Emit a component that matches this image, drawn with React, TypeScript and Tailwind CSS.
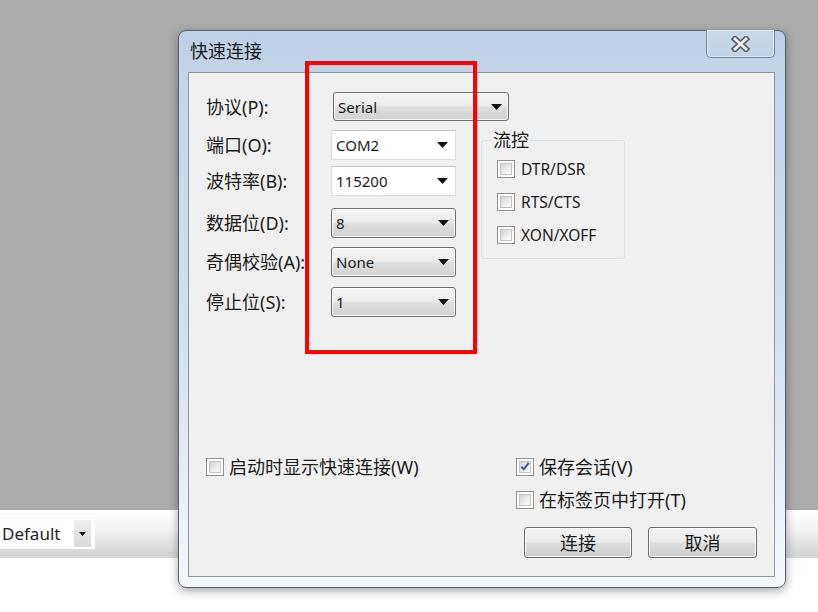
import React from "react";

const FONT = "font-['Noto_Sans','Noto_Sans_CJK_SC',sans-serif]";

function Arrow({ className = "" }: { className?: string }) {
  return (
    <svg width="11" height="6" viewBox="0 0 11 6" className={className}>
      <path d="M0 0 L11 0 L5.5 6 Z" fill="#111" />
    </svg>
  );
}

function ListCombo({ value, w, ml = 0 }: { value: string; w: number; ml?: number }) {
  return (
    <div
      className="h-full flex items-center justify-between rounded-[3px] border border-[#707070] bg-[linear-gradient(to_bottom,#f4f4f4_0%,#ececec_48%,#dedede_52%,#d2d2d2_100%)] pl-[4px] pr-[6px] shadow-[inset_0_0_0_1px_rgba(255,255,255,0.7)]"
      style={{ width: w, marginLeft: ml }}
    >
      <span className="text-[15px] leading-[20px] text-[#1c1c1c]">{value}</span>
      <Arrow />
    </div>
  );
}

function EditCombo({ value }: { value: string }) {
  return (
    <div className="h-full w-[125px] flex items-center justify-between border border-[#d9dde2] border-t-[#c3c7cc] bg-white pl-[4px] pr-[7px]">
      <span className="text-[15px] leading-[20px] text-[#1c1c1c]">{value}</span>
      <Arrow />
    </div>
  );
}

function CheckBox({ checked = false }: { checked?: boolean }) {
  return (
    <div className="w-[18px] h-[18px] shrink-0 border border-[#8e8f8f] bg-white p-[2px]">
      <div className="w-full h-full border border-[#c2c2c2] bg-[linear-gradient(135deg,#d2d2d2_0%,#eeeeee_60%,#fafafa_100%)] flex items-center justify-center">
        {checked && (
          <svg width="11" height="11" viewBox="0 0 11 11">
            <path d="M1.5 5.8 L4.2 8.6 L9.6 1.6" fill="none" stroke="#3d5597" strokeWidth="2.1" />
          </svg>
        )}
      </div>
    </div>
  );
}

function Row({ label, children, h, mt }: { label: string; children: React.ReactNode; h: number; mt: number }) {
  return (
    <div className="flex items-center" style={{ height: h, marginTop: mt }}>
      <div className="w-[125px] shrink-0 text-[18px] leading-[24px] text-[#1b1b1b] whitespace-nowrap">{label}</div>
      {children}
    </div>
  );
}

function Button({ label, w }: { label: string; w: number }) {
  return (
    <div
      className="h-[31px] rounded-[3px] border border-[#707070] bg-[linear-gradient(to_bottom,#f3f3f3_0%,#ebebeb_48%,#dddddd_52%,#cfcfcf_100%)] shadow-[inset_0_0_0_1px_rgba(255,255,255,0.75)] flex items-center justify-center text-[18px] leading-[24px] text-[#1b1b1b]"
      style={{ width: w }}
    >
      {label}
    </div>
  );
}

export default function App() {
  return (
    <div className={`relative w-[818px] h-[612px] overflow-hidden bg-white ${FONT}`}>
      {/* background app */}
      <div className="h-[510px] bg-[#ababab]" />
      <div className="h-[45px] border-t border-white bg-[linear-gradient(to_bottom,#ffffff_0%,#f3f3f3_40%,#d4d4d4_100%)] flex items-center">
        <div className="mt-[1px] h-[30px] w-[95px] bg-white flex items-center">
          <span className="pl-[2px] text-[17px] leading-[22px] text-[#222] w-[74px]">Default</span>
          <div className="h-[27px] w-[17px] bg-[linear-gradient(to_bottom,#eeeeee,#d9d9d9)] flex items-center justify-center">
            <svg width="7" height="4" viewBox="0 0 7 4">
              <path d="M0 0 L7 0 L3.5 4 Z" fill="#111" />
            </svg>
          </div>
        </div>
      </div>
      <div className="h-[3px] bg-[#d6d6d6]" />

      {/* dialog window */}
      <div className="absolute left-[178px] top-[30px] w-[608px] h-[558px] rounded-[8px] border border-[#58626d] bg-[linear-gradient(to_bottom,#bccfe4_0%,#c4d6e9_12%,#d3e1ef_55%,#e9f0f7_85%,#f4f7fa_100%)] shadow-[0_3px_10px_rgba(0,0,0,0.35)] flex flex-col">
        {/* title bar */}
        <div className="h-[41px] flex items-start">
          <div className="pl-[11px] pt-[8px] text-[18px] leading-[24px] text-[#1b1b1b]">快速连接</div>
          <div className="ml-auto mr-[10px] mt-[-1px] w-[69px] h-[28px] rounded-b-[5px] border border-t-0 border-[#7a8796] bg-[linear-gradient(to_bottom,#c9d8e8,#c0d2e5)] shadow-[inset_0_0_0_1px_rgba(255,255,255,0.45)] flex items-center justify-center">
            <svg width="19" height="16" viewBox="0 0 19 16" className="mt-[1px]">
              <path d="M4 3 L15 13 M15 3 L4 13" stroke="#5b5f66" strokeWidth="6" strokeLinecap="square" />
              <path d="M4 3 L15 13 M15 3 L4 13" stroke="#eef0f2" strokeWidth="2.8" strokeLinecap="square" />
            </svg>
          </div>
        </div>

        {/* client area */}
        <div className="ml-[9px] w-[587px] h-[505px] border border-[#8b97a4] bg-[#f0f0f0] flex flex-col">
          <div className="pl-[17px] pt-[19px]">
            <Row label="协议(P):" h={29} mt={0}>
              <ListCombo value="Serial" w={176} ml={2} />
            </Row>
            <div className="flex">
              <div>
                <Row label="端口(O):" h={30} mt={9}>
                  <EditCombo value="COM2" />
                </Row>
                <Row label="波特率(B):" h={30} mt={6}>
                  <EditCombo value="115200" />
                </Row>
                <Row label="数据位(D):" h={30} mt={12}>
                  <ListCombo value="8" w={125} />
                </Row>
                <Row label="奇偶校验(A):" h={30} mt={9}>
                  <ListCombo value="None" w={125} />
                </Row>
                <Row label="停止位(S):" h={30} mt={10}>
                  <ListCombo value="1" w={125} />
                </Row>
              </div>
              <div className="relative ml-[25px] mt-[19px] w-[144px] h-[119px] rounded-[3px] border border-[#d5dfe5] pl-[15px] pt-[19px] flex flex-col gap-[15px]">
                <div className="absolute left-[10px] -top-[12px] px-[1px] bg-[#f0f0f0] text-[18px] leading-[22px] text-[#1b1b1b]">流控</div>
                {["DTR/DSR", "RTS/CTS", "XON/XOFF"].map((t) => (
                  <div key={t} className="flex items-center h-[18px] gap-[6px]">
                    <CheckBox />
                    <span className="text-[15.5px] leading-[20px] text-[#1b1b1b] whitespace-nowrap">{t}</span>
                  </div>
                ))}
              </div>
            </div>
          </div>

          <div className="flex-1" />

          <div className="flex pl-[17px] pb-[18px]">
            <div className="w-[310px] h-[19px] flex items-center gap-[5px]">
              <CheckBox />
              <span className="text-[18px] leading-[24px] text-[#1b1b1b] whitespace-nowrap">启动时显示快速连接(W)</span>
            </div>
            <div className="flex flex-col">
              <div className="h-[19px] flex items-center gap-[5px]">
                <CheckBox checked />
                <span className="text-[18px] leading-[24px] text-[#1b1b1b] whitespace-nowrap">保存会话(V)</span>
              </div>
              <div className="mt-[14px] h-[19px] flex items-center gap-[5px]">
                <CheckBox />
                <span className="text-[18px] leading-[24px] text-[#1b1b1b] whitespace-nowrap">在标签页中打开(T)</span>
              </div>
              <div className="mt-[18px] ml-[8px] flex gap-[16px]">
                <Button label="连接" w={108} />
                <Button label="取消" w={109} />
              </div>
            </div>
          </div>
        </div>
      </div>

      {/* red annotation rectangle */}
      <div className="absolute left-[305px] top-[61px] w-[172px] h-[293px] border-[4px] border-[#ff0000]" />
    </div>
  );
}
